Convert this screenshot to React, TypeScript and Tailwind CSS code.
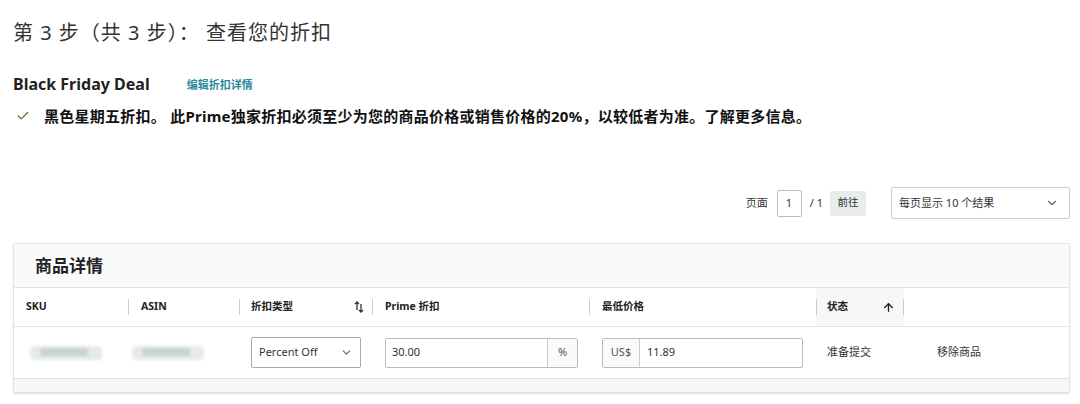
import React from "react";
import { Check, ChevronDown, ArrowUp } from "lucide-react";

const font = { fontFamily: '"Noto Sans", "Noto Sans CJK SC", sans-serif' };

const SortIcon = () => (
  <svg width="10" height="12" viewBox="0 0 10 12" className="text-[#333]">
    <path d="M3 1v8M1 3l2-2 2 2" stroke="currentColor" strokeWidth="1.3" fill="none" />
    <path d="M7 3v8M5 9l2 2 2-2" stroke="currentColor" strokeWidth="1.3" fill="none" />
  </svg>
);

const Sep = () => <span className="w-px h-[16px] bg-[#ccc]" />;

const Blur = ({ w }: { w: number }) => (
  <div className="relative h-[14px] blur-[1.5px]" style={{ width: w }}>
    <div className="absolute inset-0 bg-[#e6eaea] rounded-sm" />
    <div className="absolute left-[10px] right-[14px] top-[2px] bottom-[4px] bg-[#c9d3d4]" />
  </div>
);

export default function App() {
  return (
    <div className="w-[1080px] h-[404px] bg-white text-[#111] overflow-hidden" style={font}>
      <div className="pl-[13px] pr-[10px]">
        {/* Title */}
        <h1 className="pt-[19px] text-[20px] leading-[28px] text-[#333] tracking-[1px]">
          第 3 步（共 3 步）： 查看您的折扣
        </h1>

        {/* Deal name */}
        <div className="mt-[25px] flex items-center">
          <span className="text-[16px] font-bold text-[#222] leading-[24px]">Black Friday Deal</span>
          <a className="ml-[37px] mt-[3px] text-[11px] text-[#2a8a9a] font-semibold">编辑折扣详情</a>
        </div>

        <div className="mt-[9px] flex items-center">
          <Check className="ml-[3px] w-[14px] h-[14px] text-[#5a6a2a]" strokeWidth={2} />
          <span className="ml-[14px] text-[15px] tracking-[0.25px] font-bold text-[#111] leading-[22px]">
            黑色星期五折扣。 此Prime独家折扣必须至少为您的商品价格或销售价格的20%，以较低者为准。了解更多信息。
          </span>
        </div>

        {/* Pagination */}
        <div className="mt-[60px] flex items-center justify-end text-[11px] text-[#333]">
          <span>页面</span>
          <div className="ml-[9px] w-[25px] h-[27px] border border-[#bbb] rounded-[2px] flex items-center pl-[8px]">1</div>
          <span className="ml-[8px]">/ 1</span>
          <button className="ml-[7px] w-[36px] h-[25px] bg-[#e8ecec] rounded-[2px] text-[10.5px]">前往</button>
          <div className="ml-[25px] w-[179px] h-[32px] border border-[#ccc] rounded-[2px] flex items-center justify-between pl-[7px] pr-[10px]">
            <span>每页显示 10 个结果</span>
            <ChevronDown className="w-[14px] h-[14px] text-[#666]" />
          </div>
        </div>

        {/* Card */}
        <div className="mt-[24px] border border-[#e3e3e3] rounded-[2px] shadow-[0_1px_2px_rgba(0,0,0,0.12)] overflow-hidden">
          <div className="h-[44px] bg-[#fafafa] border-b border-[#e3e3e3] flex items-center pl-[21px]">
            <span className="text-[17px] font-bold text-[#222]">商品详情</span>
          </div>

          <div className="grid grid-cols-[114px_111px_133px_217px_227px_88px_1fr] h-[39px] border-b border-[#e3e3e3] text-[10.5px] font-bold text-[#222]">
            <div className="flex items-center pl-[12px]">SKU</div>
            <div className="flex items-center"><Sep /><span className="ml-[12px]">ASIN</span></div>
            <div className="flex items-center"><Sep /><span className="ml-[11px] flex-1">折扣类型</span><span className="mr-[8px]"><SortIcon /></span></div>
            <div className="flex items-center"><Sep /><span className="ml-[12px]">Prime 折扣</span></div>
            <div className="flex items-center"><Sep /><span className="ml-[12px]">最低价格</span></div>
            <div className="flex items-center bg-[#f6f7f7]"><Sep /><span className="ml-[10px] flex-1">状态</span><ArrowUp className="w-[13px] h-[13px] mr-[8px]" strokeWidth={2.5} /><Sep /></div>
            <div />
          </div>

          <div className="grid grid-cols-[114px_111px_133px_217px_227px_88px_1fr] h-[51px] items-center text-[11px] text-[#333]">
            <div className="pl-[16px]"><Blur w={72} /></div>
            <div className="pl-[4px]"><Blur w={72} /></div>
            <div className="pl-[12px]">
              <div className="w-[110px] h-[31px] border border-[#aaa] rounded-[2px] flex items-center justify-between pl-[7px] pr-[7px]">
                <span>Percent Off</span>
                <ChevronDown className="w-[13px] h-[13px] text-[#666]" />
              </div>
            </div>
            <div className="pl-[13px]">
              <div className="w-[193px] h-[30px] border border-[#bbb] rounded-[2px] flex">
                <div className="flex-1 flex items-center pl-[6px]">30.00</div>
                <div className="w-[30px] border-l border-[#ccc] bg-[#fafafa] flex items-center justify-center text-[#555]">%</div>
              </div>
            </div>
            <div className="pl-[13px]">
              <div className="w-[201px] h-[30px] border border-[#bbb] rounded-[2px] flex">
                <div className="w-[37px] border-r border-[#ccc] bg-[#fafafa] flex items-center justify-center text-[#555]">US$</div>
                <div className="flex-1 flex items-center pl-[7px]">11.89</div>
              </div>
            </div>
            <div className="pl-[11px]">准备提交</div>
            <div className="pl-[33px]">移除商品</div>
          </div>

          <div className="h-[14px] bg-[#f7f7f7] border-t border-[#e3e3e3]" />
        </div>
      </div>
    </div>
  );
}
